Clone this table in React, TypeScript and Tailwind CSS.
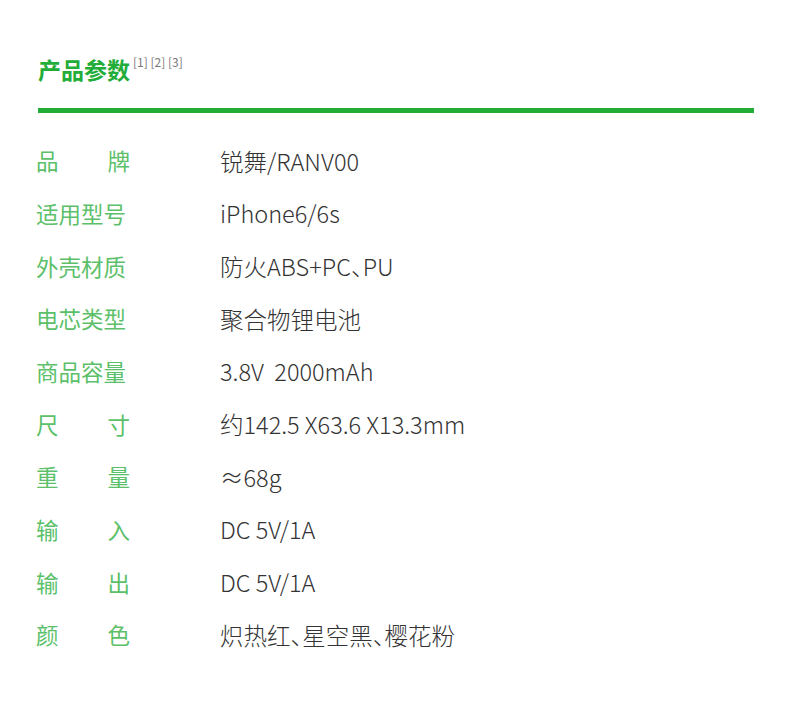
const rows: [string, string][] = [
  ["品牌", "锐舞/RANV00"],
  ["适用型号", "iPhone6/6s"],
  ["外壳材质", "防火ABS+PC、PU"],
  ["电芯类型", "聚合物锂电池"],
  ["商品容量", "3.8V  2000mAh"],
  ["尺寸", "约142.5 X63.6 X13.3mm"],
  ["重量", "≈68g"],
  ["输入", "DC 5V/1A"],
  ["输出", "DC 5V/1A"],
  ["颜色", "炽热红、星空黑、樱花粉"],
];

function Value({ text }: { text: string }) {
  const parts = text.split("、");
  return (
    <>
      {parts.map((p, i) => (
        <span key={i}>
          {p}
          {i < parts.length - 1 && <span className="mr-[-0.5em]">、</span>}
        </span>
      ))}
    </>
  );
}

export default function App() {
  return (
    <main
      className="w-[790px] h-[707px] bg-white"
      style={{ fontFamily: '"Noto Sans CJK SC", "Noto Sans", sans-serif' }}
    >
      {/* Header */}
      <div className="pl-[38px] pt-[53px] flex items-start">
        <h2 className="text-[23px] leading-[32px] font-bold text-[#22ac38]">产品参数</h2>
        <span className="ml-[3px] mt-[1px] text-[12px] leading-[16px] text-[#777] whitespace-pre">
          [1] [2] [3]
        </span>
      </div>
      <div className="ml-[38px] mr-[36px] mt-[23px] h-[5px] bg-[#22ac38]" />

      {/* Spec rows */}
      <div className="mt-[22px] pl-[36px]">
        {rows.map(([label, value]) => (
          <div key={label} className="h-[52.67px] flex items-center">
            <div
              className={`w-[94px] text-[22.5px] text-[#5cbf6a] flex ${
                label.length === 2 ? "justify-between" : ""
              }`}
            >
              {label.split("").map((c, i) => (
                <span key={i}>{c}</span>
              ))}
            </div>
            <div className="ml-[90px] text-[23.5px] font-light text-[#333] whitespace-pre">
              <Value text={value} />
            </div>
          </div>
        ))}
      </div>
    </main>
  );
}
